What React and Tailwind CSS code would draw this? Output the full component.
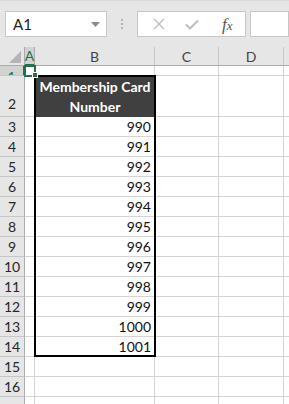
import React from "react";

const rows = [
  { n: 3, v: "990" }, { n: 4, v: "991" }, { n: 5, v: "992" }, { n: 6, v: "993" },
  { n: 7, v: "994" }, { n: 8, v: "995" }, { n: 9, v: "996" }, { n: 10, v: "997" },
  { n: 11, v: "998" }, { n: 12, v: "999" }, { n: 13, v: "1000" }, { n: 14, v: "1001" },
  { n: 15, v: "" }, { n: 16, v: "" }, { n: "", v: "" },
];

function Cells({ b }) {
  return (
    <>
      <div className="w-[10px] shrink-0 border-r border-b border-[#d4d4d4]" />
      <div className="w-[120px] shrink-0 border-r border-b border-[#d4d4d4] flex items-center justify-end pr-[3px] text-[#111]">{b}</div>
      <div className="w-[64px] shrink-0 border-r border-b border-[#d4d4d4]" />
      <div className="w-[65px] shrink-0 border-r border-b border-[#d4d4d4]" />
      <div className="flex-1 border-b border-[#d4d4d4]" />
    </>
  );
}

export default function App() {
  return (
    <div className="w-[289px] h-[404px] overflow-hidden bg-white" style={{ fontFamily: "Lato, 'Liberation Sans', sans-serif" }}>
      {/* Formula bar */}
      <div className="h-[47px] bg-[#e6e6e6] border-t border-[#d9d9d9] flex items-start pt-[10px] pl-[5px]">
        <div className="w-[102px] h-[26px] bg-white border border-[#c6c6c6] flex items-center pl-[7px] pr-[6px]">
          <span className="text-[15px] text-[#222] leading-none">A1</span>
          <svg className="ml-auto" width="9" height="5" viewBox="0 0 9 5"><path d="M0 0h9L4.5 5z" fill="#8a8a8a" /></svg>
        </div>
        <div className="w-[30px] h-[26px] flex flex-col items-center justify-center gap-[2px]">
          <div className="w-[2px] h-[2px] bg-[#b5b5b5]" />
          <div className="w-[2px] h-[2px] bg-[#b5b5b5]" />
          <div className="w-[2px] h-[2px] bg-[#b5b5b5]" />
        </div>
        <div className="w-[109px] h-[26px] bg-white border border-[#c6c6c6] flex items-center">
          <div className="w-[36px] flex justify-center pl-[6px]">
            <svg width="12" height="12" viewBox="0 0 12 12"><path d="M1 1L11 11M11 1L1 11" stroke="#bdbdbd" strokeWidth="1.4" /></svg>
          </div>
          <div className="w-[36px] flex justify-center">
            <svg width="14" height="11" viewBox="0 0 14 11"><path d="M1 5.5L5 9.5L13 1.5" stroke="#bdbdbd" strokeWidth="2" fill="none" /></svg>
          </div>
          <div className="w-[36px] flex justify-center">
            <span className="text-[17px] italic text-[#555] leading-none" style={{ fontFamily: "'Liberation Serif', serif" }}>f<span className="text-[13px]">x</span></span>
          </div>
        </div>
        <div className="ml-[4px] flex-1 h-[26px] bg-white border border-[#c6c6c6]" />
      </div>

      {/* Grid */}
      <div className="relative text-[14px]">
        {/* column headers */}
        <div className="flex h-[19px] bg-[#e6e6e6] text-[#444]">
          <div className="w-[25px] shrink-0 border-r border-b border-[#ababab] flex items-end justify-end pr-[3px] pb-[2px]">
            <svg width="12" height="12" viewBox="0 0 12 12"><path d="M12 0V12H0z" fill="#b4b4b4" /></svg>
          </div>
          <div className="w-[10px] shrink-0 bg-[#d2d2d2] border-r border-[#ababab] border-b-2 border-b-[#217346] flex items-center justify-center text-[#217346] overflow-hidden">A</div>
          <div className="w-[120px] shrink-0 border-r border-b border-[#ababab] border-r-[#c6c6c6] flex items-center justify-center">B</div>
          <div className="w-[64px] shrink-0 border-r border-b border-[#ababab] border-r-[#c6c6c6] flex items-center justify-center">C</div>
          <div className="w-[65px] shrink-0 border-r border-b border-[#ababab] border-r-[#c6c6c6] flex items-center justify-center">D</div>
          <div className="flex-1 border-b border-[#ababab]" />
        </div>

        {/* row 1 */}
        <div className="flex h-[10px]">
          <div className="w-[25px] shrink-0 bg-[#d2d2d2] border-r-2 border-r-[#217346] border-b border-b-[#c6c6c6] overflow-hidden flex justify-center text-[#217346] leading-[20px] pt-[1px]">1</div>
          <Cells b="" />
        </div>

        {/* row 2 */}
        <div className="flex h-[41px]">
          <div className="w-[25px] shrink-0 bg-[#e6e6e6] border-r border-r-[#ababab] border-b border-b-[#c6c6c6] flex items-end justify-center pb-[2px] text-[#262626]">2</div>
          <div className="w-[10px] shrink-0 border-r border-b border-[#d4d4d4]" />
          <div className="w-[120px] shrink-0 bg-[#404040] flex flex-col items-center justify-center text-white font-bold leading-[20px] pt-[1px]">
            <span>Membership Card</span>
            <span>Number</span>
          </div>
          <div className="w-[64px] shrink-0 border-r border-b border-[#d4d4d4]" />
          <div className="w-[65px] shrink-0 border-r border-b border-[#d4d4d4]" />
          <div className="flex-1 border-b border-[#d4d4d4]" />
        </div>

        {rows.map((r, i) => (
          <div key={i} className="flex h-[20px]">
            <div className="w-[25px] shrink-0 bg-[#e6e6e6] border-r border-r-[#ababab] border-b border-b-[#c6c6c6] flex items-center justify-center text-[#262626]">{r.n}</div>
            <Cells b={r.v} />
          </div>
        ))}

        {/* table outline */}
        <div className="pointer-events-none absolute left-[34px] top-[28px] w-[122px] h-[282px] border-2 border-black" />
        {/* selection */}
        <div className="pointer-events-none absolute left-[24px] top-[18px] w-[12px] h-[12px] border-2 border-[#217346]" />
        <div className="pointer-events-none absolute left-[32px] top-[25px] w-[6px] h-[6px] bg-[#217346] border border-white" />
      </div>
    </div>
  );
}
